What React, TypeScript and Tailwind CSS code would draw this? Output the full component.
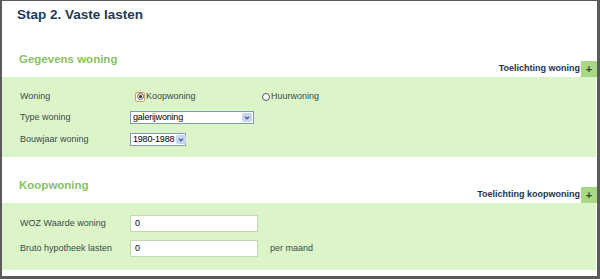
import React from "react";

const font = { fontFamily: '"Liberation Sans", Arial, sans-serif' };

function PlusBox() {
  return (
    <span className="flex h-[16px] w-[16px] items-center justify-center bg-[#a9d882] text-[11px] font-bold leading-none text-[#2c4a2c]">
      +
    </span>
  );
}

function SectionHeader({ title, help }: { title: string; help: string }) {
  return (
    <div className="flex items-end justify-between pl-[17px]">
      <h2 className="mb-[11px] text-[11.5px] font-bold leading-[14px] text-[#8ac163]">{title}</h2>
      <div className="flex items-center gap-[1px]">
        <span className="text-[9px] font-bold text-[#23344a]">{help}</span>
        <PlusBox />
      </div>
    </div>
  );
}

function Select({ value, width }: { value: string; width: string }) {
  return (
    <div className={`flex h-[13px] items-center justify-between gap-[2px] border border-[#7f9db9] bg-white pl-[2px] pr-[1px] ${width}`}>
      <span className="text-[9px] leading-none tracking-[-0.2px] text-black">{value}</span>
      <span className="flex h-[9px] w-[10px] shrink-0 items-center justify-center rounded-[2px] bg-[#c6d6f2]">
        <svg width="6" height="4" viewBox="0 0 6 4">
          <path d="M1 0.8 L3 2.8 L5 0.8" stroke="#4d6185" strokeWidth="1.3" fill="none" />
        </svg>
      </span>
    </div>
  );
}

function TextInput({ value }: { value: string }) {
  return (
    <div className="flex h-[17px] w-[128px] items-center border border-[#c4d8b4] bg-white pl-[4px] text-[9px] text-black">
      {value}
    </div>
  );
}

function Radio({ checked, label }: { checked?: boolean; label: string }) {
  return (
    <div className="flex items-center gap-[1px]">
      {checked ? (
        <span className="flex h-[10px] w-[10px] items-center justify-center rounded-[2px] border border-[#d0a060] bg-white">
          <span className="flex h-[7px] w-[7px] items-center justify-center rounded-full border border-[#555]">
            <span className="h-[3px] w-[3px] rounded-full bg-[#222]" />
          </span>
        </span>
      ) : (
        <span className="h-[8px] w-[8px] rounded-full border border-[#4a5a6a] bg-white" />
      )}
      <span className="text-[9px] text-[#3b4a4a]">{label}</span>
    </div>
  );
}

export default function App() {
  return (
    <div
      className="h-[279px] w-[600px] overflow-hidden whitespace-nowrap border-b-[3px] border-l-2 border-r-[3px] border-t border-[#5a5a5a] bg-white"
      style={font}
    >
      <div className="pl-[15px] pt-[6px]">
        <h1 className="text-[13.5px] font-bold leading-[16px] text-[#1f3a55]">Stap 2. Vaste lasten</h1>
      </div>

      <div className="mt-[29px]">
        <SectionHeader title="Gegevens woning" help="Toelichting woning" />
        <div className="mr-[1px] h-[80px] bg-[#dbf5c8] pl-[18px] pt-[13px] text-[9px] text-[#3b4a4a]">
          <div className="flex h-[13px] items-center">
            <span className="w-[115px]">Woning</span>
            <div className="w-[127px]">
              <Radio checked label="Koopwoning" />
            </div>
            <Radio label="Huurwoning" />
          </div>
          <div className="mt-[8px] flex h-[13px] items-center">
            <span className="w-[110px]">Type woning</span>
            <Select value="galerijwoning" width="w-[124px]" />
          </div>
          <div className="mt-[9px] flex h-[13px] items-center">
            <span className="w-[110px]">Bouwjaar woning</span>
            <Select value="1980-1988" width="w-[56px]" />
          </div>
        </div>
      </div>

      <div className="mt-[21px]">
        <SectionHeader title="Koopwoning" help="Toelichting koopwoning" />
        <div className="mr-[1px] h-[67px] bg-[#dbf5c8] pl-[18px] pt-[12px] text-[9px] text-[#3b4a4a]">
          <div className="flex items-center">
            <span className="w-[110px]">WOZ Waarde woning</span>
            <TextInput value="0" />
          </div>
          <div className="mt-[8px] flex items-center">
            <span className="w-[110px]">Bruto hypotheek lasten</span>
            <TextInput value="0" />
            <span className="ml-[12px]">per maand</span>
          </div>
        </div>
      </div>
    </div>
  );
}
